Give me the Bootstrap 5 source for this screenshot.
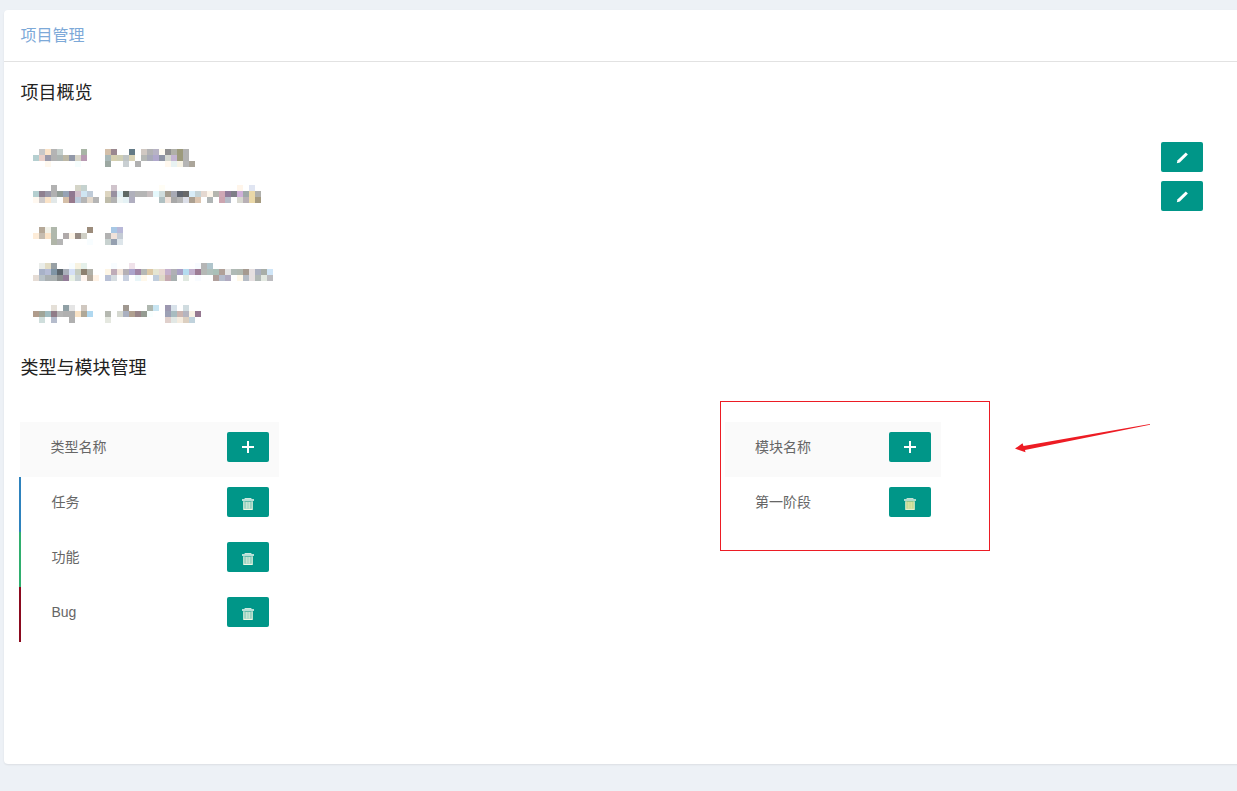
<!DOCTYPE html>
<html lang="zh-CN">
<head>
<meta charset="utf-8">
<title>项目管理</title>
<link href="https://cdn.jsdelivr.net/npm/bootstrap@5.3.0/dist/css/bootstrap.min.css" rel="stylesheet">
<style>
html,body{height:100%}
body{background:#edf1f6;overflow:hidden;font-family:"Liberation Sans","Noto Sans CJK SC",sans-serif;font-size:14px;color:#666;padding:10px 0 0 4px}
.pm-card{width:1253px;border:0;border-radius:4px;box-shadow:0 1px 2px rgba(0,0,0,.08);background:#fff;padding-bottom:122px}
.pm-head{height:52px;border-bottom:1px solid #e2e2e2;padding:0 16.5px;font-size:16px;line-height:52px;color:#7da9d8}
.pm-sec{font-size:18px;line-height:27px;color:#222;margin:0 0 0 16.5px;font-weight:400}
.pm-sec-first{margin-top:18px}
.pm-overview{margin:35px 54px 2px 17px;height:211px}
.pm-mosaic{display:block;margin:7px 0 0 12px}
.pm-mosaic rect{width:6px;height:6px}
.pm-edit-col{gap:9px}
.pm-btn{width:42px;height:30px;padding:0;border:0;border-radius:2px;background:#009688;display:flex;align-items:center;justify-content:center;flex:none}
.pm-btn:hover,.pm-btn:active{background:#009688}
.pm-trash{margin-top:3px}
.pm-tables{margin:40px 0 0 16px}
.pm-left{width:259px}
.pm-right{width:216px;margin-left:446px;position:relative}
.pm-row{height:55px;padding:10px 10px 0 30.5px;line-height:30px}
.pm-right .pm-row{padding-left:30px}
.pm-th{background:#fafafa}
.pm-tr{border-left:2px solid transparent;margin-left:-1px;margin-right:0}
.pm-blue{border-left-color:#2e82bd}
.pm-green{border-left-color:#2fae6e}
.pm-red{border-left-color:#8b0a1f}
.pm-box{position:absolute;left:-5px;top:-21px;width:270px;height:150px;border:1px solid #ec1c24;pointer-events:none}
.pm-arrow{position:absolute;left:285px;top:-2px;pointer-events:none}
</style>
</head>
<body>
<div class="card pm-card">
  <div class="pm-head">项目管理</div>
  <h2 class="pm-sec pm-sec-first">项目概览</h2>
  <div class="pm-overview d-flex justify-content-between align-items-start">
    <svg class="pm-mosaic" width="244" height="180" viewBox="0 0 244 180" aria-hidden="true">
      <g>
        <rect x="6" y="0" fill="#c8c8c8"/><rect x="12" y="0" fill="#fae3c8"/><rect x="18" y="0" fill="#b4b4b4"/><rect x="24" y="0" fill="#c5cfcc"/><rect x="48" y="0" fill="#a8b5a5"/><rect x="72" y="0" fill="#d3bfa9"/><rect x="78" y="0" fill="#9a8890"/><rect x="96" y="0" fill="#637a86"/><rect x="108" y="0" fill="#d0c8c2"/><rect x="114" y="0" fill="#b2b2b4"/><rect x="120" y="0" fill="#b7b3c4"/><rect x="126" y="0" fill="#fffcf2"/><rect x="132" y="0" fill="#8f8f8f"/><rect x="138" y="0" fill="#b0b0a8"/><rect x="144" y="0" fill="#9c9a7c"/><rect x="150" y="0" fill="#b2b2b2"/>
        <rect x="0" y="6" fill="#b5cfd0"/><rect x="6" y="6" fill="#e8cfc8"/><rect x="12" y="6" fill="#9a9aaa"/><rect x="18" y="6" fill="#b2b2b2"/><rect x="24" y="6" fill="#adb5b2"/><rect x="30" y="6" fill="#bdb8a5"/><rect x="36" y="6" fill="#9298a8"/><rect x="42" y="6" fill="#d8d5c8"/><rect x="48" y="6" fill="#b89ab2"/><rect x="72" y="6" fill="#a9b8b8"/><rect x="78" y="6" fill="#d5d0b0"/><rect x="84" y="6" fill="#cfcfb5"/><rect x="90" y="6" fill="#bfc4c4"/><rect x="96" y="6" fill="#d8d2b5"/><rect x="108" y="6" fill="#b5b8b5"/><rect x="114" y="6" fill="#a8aab8"/><rect x="120" y="6" fill="#b0a8cc"/><rect x="126" y="6" fill="#8f95a5"/><rect x="132" y="6" fill="#d5d8d0"/><rect x="138" y="6" fill="#c4b5d2"/><rect x="144" y="6" fill="#9c9a7c"/><rect x="150" y="6" fill="#b2b2b2"/>
        <rect x="12" y="12" fill="#fff8ee"/><rect x="42" y="12" fill="#f5fdfd"/><rect x="72" y="12" fill="#9ca8a2"/><rect x="90" y="12" fill="#c9cfd2"/><rect x="102" y="12" fill="#b0b0b0"/><rect x="132" y="12" fill="#fff8ee"/><rect x="138" y="12" fill="#e8f2f2"/><rect x="144" y="12" fill="#f7f3e5"/><rect x="150" y="12" fill="#b5b5b5"/><rect x="156" y="12" fill="#aba59a"/>
      </g>
      <g transform="translate(0 36)">
        <rect x="18" y="0" fill="#b2b2b2"/><rect x="42" y="0" fill="#d5d5c8"/><rect x="48" y="0" fill="#c5d2cf"/><rect x="78" y="0" fill="#d0c4cc"/><rect x="126" y="0" fill="#fffdf5"/><rect x="204" y="0" fill="#fff5ea"/><rect x="216" y="0" fill="#e0e5f2"/>
        <rect x="0" y="6" fill="#b5cfd0"/><rect x="6" y="6" fill="#8f8090"/><rect x="12" y="6" fill="#9a98a8"/><rect x="18" y="6" fill="#b0b0b0"/><rect x="24" y="6" fill="#919c96"/><rect x="30" y="6" fill="#97a3b5"/><rect x="36" y="6" fill="#907890"/><rect x="42" y="6" fill="#d2bfca"/><rect x="48" y="6" fill="#cfe5f2"/><rect x="54" y="6" fill="#bfcbd8"/><rect x="72" y="6" fill="#ddd5c0"/><rect x="78" y="6" fill="#9890a0"/><rect x="84" y="6" fill="#e0f0f5"/><rect x="90" y="6" fill="#5f6965"/><rect x="96" y="6" fill="#b0b0bb"/><rect x="102" y="6" fill="#b5b5b5"/><rect x="108" y="6" fill="#b5b5b5"/><rect x="114" y="6" fill="#c8bfc0"/><rect x="120" y="6" fill="#e5f8fc"/><rect x="126" y="6" fill="#cfdcdc"/><rect x="132" y="6" fill="#a59d90"/><rect x="138" y="6" fill="#a8aab5"/><rect x="144" y="6" fill="#60656f"/><rect x="150" y="6" fill="#6a6a6a"/><rect x="156" y="6" fill="#d8ecf7"/><rect x="162" y="6" fill="#c5d2d5"/><rect x="168" y="6" fill="#e5d8d0"/><rect x="174" y="6" fill="#fdf5ea"/><rect x="180" y="6" fill="#b5b5ae"/><rect x="186" y="6" fill="#cfa8b5"/><rect x="192" y="6" fill="#907c9a"/><rect x="198" y="6" fill="#7f7f88"/><rect x="204" y="6" fill="#cfb0d8"/><rect x="210" y="6" fill="#9fa8a8"/><rect x="216" y="6" fill="#ead8a8"/><rect x="222" y="6" fill="#b0b0ac"/>
        <rect x="0" y="12" fill="#fff8f0"/><rect x="6" y="12" fill="#cfcbcb"/><rect x="12" y="12" fill="#fae3c8"/><rect x="18" y="12" fill="#e2e8e8"/><rect x="30" y="12" fill="#d5bfa8"/><rect x="36" y="12" fill="#96788c"/><rect x="42" y="12" fill="#bccada"/><rect x="48" y="12" fill="#b5b5b5"/><rect x="54" y="12" fill="#e2d8cc"/><rect x="60" y="12" fill="#b5b5b5"/><rect x="72" y="12" fill="#bfbcaa"/><rect x="78" y="12" fill="#b2b2b2"/><rect x="84" y="12" fill="#eef5f5"/><rect x="90" y="12" fill="#e5f2f5"/><rect x="96" y="12" fill="#b0aec0"/><rect x="126" y="12" fill="#b0c0c2"/><rect x="132" y="12" fill="#efe2da"/><rect x="138" y="12" fill="#a8a8a8"/><rect x="144" y="12" fill="#b5b5b5"/><rect x="150" y="12" fill="#dcdfe8"/><rect x="156" y="12" fill="#ab9f90"/><rect x="162" y="12" fill="#dcc5b0"/><rect x="174" y="12" fill="#b0b5b5"/><rect x="186" y="12" fill="#cca5b0"/><rect x="192" y="12" fill="#b5bcc8"/><rect x="204" y="12" fill="#d8d8d0"/><rect x="210" y="12" fill="#b8b0b5"/><rect x="216" y="12" fill="#ead8a8"/><rect x="222" y="12" fill="#a59a80"/>
      </g>
      <g transform="translate(0 78)">
        <rect x="6" y="0" fill="#b5a898"/><rect x="12" y="0" fill="#f2f2ea"/><rect x="18" y="0" fill="#b0b8ac"/><rect x="54" y="0" fill="#9c8c7c"/><rect x="78" y="0" fill="#a8c8e5"/><rect x="84" y="0" fill="#b8b8d8"/>
        <rect x="0" y="6" fill="#fdecd8"/><rect x="6" y="6" fill="#c5bcb0"/><rect x="12" y="6" fill="#fae3c8"/><rect x="18" y="6" fill="#b0b8ac"/><rect x="30" y="6" fill="#b0aaaa"/><rect x="36" y="6" fill="#fdf5e8"/><rect x="42" y="6" fill="#988c84"/><rect x="48" y="6" fill="#cfcfc5"/><rect x="72" y="6" fill="#b2b2b2"/><rect x="78" y="6" fill="#f0e2da"/><rect x="84" y="6" fill="#c5ccd5"/>
        <rect x="18" y="12" fill="#b0b5a8"/><rect x="24" y="12" fill="#b5b5b5"/><rect x="54" y="12" fill="#f8fdff"/><rect x="72" y="12" fill="#c8d2d0"/><rect x="78" y="12" fill="#95a0b0"/><rect x="84" y="12" fill="#dde5ea"/>
      </g>
      <g transform="translate(0 114)">
        <rect x="6" y="0" fill="#eaedea"/><rect x="12" y="0" fill="#e2dcc5"/><rect x="18" y="0" fill="#98a0a5"/><rect x="36" y="0" fill="#f8fdff"/><rect x="42" y="0" fill="#f7f2e0"/><rect x="48" y="0" fill="#e5f0ea"/><rect x="78" y="0" fill="#f8fcff"/><rect x="96" y="0" fill="#f0e2ea"/><rect x="162" y="0" fill="#f8fbff"/><rect x="168" y="0" fill="#b5b5b5"/><rect x="174" y="0" fill="#b0c5cc"/>
        <rect x="6" y="6" fill="#a8b2c8"/><rect x="12" y="6" fill="#b5bcd5"/><rect x="18" y="6" fill="#8095a5"/><rect x="24" y="6" fill="#5c656c"/><rect x="30" y="6" fill="#aab0ba"/><rect x="36" y="6" fill="#d5dff5"/><rect x="42" y="6" fill="#c5ccc0"/><rect x="48" y="6" fill="#8c8070"/><rect x="54" y="6" fill="#b0b0a8"/><rect x="72" y="6" fill="#fdf5e5"/><rect x="78" y="6" fill="#bfacb8"/><rect x="84" y="6" fill="#f2e5da"/><rect x="90" y="6" fill="#b5b0b5"/><rect x="96" y="6" fill="#aca5cc"/><rect x="102" y="6" fill="#a085a5"/><rect x="108" y="6" fill="#b5b8b5"/><rect x="114" y="6" fill="#dcc8a5"/><rect x="120" y="6" fill="#e5e5d2"/><rect x="126" y="6" fill="#e8d8d2"/><rect x="132" y="6" fill="#c5b0cc"/><rect x="138" y="6" fill="#b0b0b5"/><rect x="144" y="6" fill="#a8a0c5"/><rect x="150" y="6" fill="#b5dcf0"/><rect x="156" y="6" fill="#c0b0cc"/><rect x="162" y="6" fill="#9c7c95"/><rect x="168" y="6" fill="#b5b8b5"/><rect x="174" y="6" fill="#b0c0bc"/><rect x="180" y="6" fill="#aac0b8"/><rect x="186" y="6" fill="#b0a098"/><rect x="192" y="6" fill="#e5e5e5"/><rect x="198" y="6" fill="#b0bab5"/><rect x="204" y="6" fill="#b0b8b0"/><rect x="210" y="6" fill="#a59a90"/><rect x="216" y="6" fill="#e5dfe0"/><rect x="222" y="6" fill="#aab0c0"/><rect x="228" y="6" fill="#a8aea8"/><rect x="234" y="6" fill="#cfe5f7"/>
        <rect x="0" y="12" fill="#e5dcd5"/><rect x="6" y="12" fill="#b8c2c8"/><rect x="12" y="12" fill="#aab0b2"/><rect x="18" y="12" fill="#aab0b0"/><rect x="24" y="12" fill="#8c9090"/><rect x="30" y="12" fill="#937c98"/><rect x="36" y="12" fill="#e8f0e5"/><rect x="42" y="12" fill="#c8d2d5"/><rect x="48" y="12" fill="#fff5f0"/><rect x="54" y="12" fill="#b2a89c"/><rect x="60" y="12" fill="#fff2e5"/><rect x="72" y="12" fill="#b8c0d5"/><rect x="78" y="12" fill="#d5dce0"/><rect x="90" y="12" fill="#c8d0e0"/><rect x="102" y="12" fill="#e8f5f8"/><rect x="108" y="12" fill="#fff8ea"/><rect x="120" y="12" fill="#c0cddc"/><rect x="126" y="12" fill="#ded8c8"/><rect x="132" y="12" fill="#c5a8b0"/><rect x="138" y="12" fill="#a8b0b0"/><rect x="150" y="12" fill="#dfe8e0"/><rect x="162" y="12" fill="#f8fbff"/><rect x="180" y="12" fill="#b0a09c"/><rect x="186" y="12" fill="#b5bccc"/><rect x="192" y="12" fill="#b0aac0"/><rect x="204" y="12" fill="#fff8e8"/><rect x="210" y="12" fill="#b5bcc5"/><rect x="216" y="12" fill="#e5dfe0"/><rect x="222" y="12" fill="#b0b8b5"/><rect x="228" y="12" fill="#e2e8e0"/><rect x="234" y="12" fill="#bcbcc0"/>
      </g>
      <g transform="translate(0 156)">
        <rect x="18" y="0" fill="#e5e0d8"/><rect x="30" y="0" fill="#90a0a5"/><rect x="36" y="0" fill="#e5e5e5"/><rect x="48" y="0" fill="#d0c8c0"/><rect x="90" y="0" fill="#a09890"/><rect x="114" y="0" fill="#b0b8b0"/><rect x="120" y="0" fill="#c8e5f2"/><rect x="132" y="0" fill="#9c98b0"/><rect x="138" y="0" fill="#d8e2ea"/><rect x="150" y="0" fill="#d0dce0"/>
        <rect x="0" y="6" fill="#b09c8c"/><rect x="6" y="6" fill="#a0a598"/><rect x="12" y="6" fill="#a0bcc0"/><rect x="18" y="6" fill="#907c88"/><rect x="24" y="6" fill="#b5b5b5"/><rect x="30" y="6" fill="#b0b0b0"/><rect x="36" y="6" fill="#b0b0b0"/><rect x="42" y="6" fill="#f8e2c5"/><rect x="48" y="6" fill="#b0a898"/><rect x="54" y="6" fill="#b0d8f0"/><rect x="72" y="6" fill="#b5b8b0"/><rect x="84" y="6" fill="#d5d8d0"/><rect x="90" y="6" fill="#aab0c0"/><rect x="96" y="6" fill="#b0a090"/><rect x="102" y="6" fill="#988488"/><rect x="108" y="6" fill="#959c92"/><rect x="114" y="6" fill="#f8ffff"/><rect x="132" y="6" fill="#9ca0b5"/><rect x="138" y="6" fill="#a8bcc0"/><rect x="144" y="6" fill="#ccb5b0"/><rect x="150" y="6" fill="#b5b5c0"/><rect x="156" y="6" fill="#f8f2e5"/><rect x="162" y="6" fill="#957890"/>
        <rect x="6" y="12" fill="#cfdedc"/><rect x="18" y="12" fill="#b5bccc"/><rect x="36" y="12" fill="#b0b0b0"/><rect x="72" y="12" fill="#e5e8e0"/><rect x="132" y="12" fill="#e0d0cc"/><rect x="138" y="12" fill="#e2e8e5"/><rect x="144" y="12" fill="#f5ecdf"/><rect x="150" y="12" fill="#dccfc0"/><rect x="156" y="12" fill="#c0d2dc"/>
      </g>
    </svg>
    <div class="pm-edit-col d-flex flex-column">
      <button type="button" class="btn pm-btn" aria-label="编辑"><svg width="14" height="14" viewBox="0 0 14 14"><path d="M1.8 13.2L2.6 10.2L10.8 2.4L12.9 4.4L4.8 12.4Z" fill="#fff"/></svg></button>
      <button type="button" class="btn pm-btn" aria-label="编辑"><svg width="14" height="14" viewBox="0 0 14 14"><path d="M1.8 13.2L2.6 10.2L10.8 2.4L12.9 4.4L4.8 12.4Z" fill="#fff"/></svg></button>
    </div>
  </div>
  <h2 class="pm-sec">类型与模块管理</h2>
  <div class="pm-tables d-flex align-items-start">
    <div class="pm-left">
      <div class="pm-row pm-th d-flex justify-content-between"><span>类型名称</span><button type="button" class="btn pm-btn" aria-label="添加"><svg width="14" height="14" viewBox="0 0 14 14"><path d="M7 1v12M1 7h12" stroke="#fff" stroke-width="2" fill="none"/></svg></button></div>
      <div class="pm-row pm-tr pm-blue d-flex justify-content-between"><span>任务</span><button type="button" class="btn pm-btn" aria-label="删除"><svg class="pm-trash" width="14" height="14" viewBox="0 0 14 14"><path d="M1 2.2h12v1.6H1z" fill="#e4f2ea"/><path d="M4 1h6l1 1.2H3z" fill="#cfe8df"/><path d="M2.8 4.2v8.2h8.4V4.2" fill="#7cc4b4" stroke="#f0f6e4" stroke-width="1.1"/><path d="M5.2 5v6.6M7 5v6.6M8.8 5v6.6" stroke="#f4fbe8" stroke-width=".9"/></svg></button></div>
      <div class="pm-row pm-tr pm-green d-flex justify-content-between"><span>功能</span><button type="button" class="btn pm-btn" aria-label="删除"><svg class="pm-trash" width="14" height="14" viewBox="0 0 14 14"><path d="M1 2.2h12v1.6H1z" fill="#e4f2ea"/><path d="M4 1h6l1 1.2H3z" fill="#cfe8df"/><path d="M2.8 4.2v8.2h8.4V4.2" fill="#7cc4b4" stroke="#f0f6e4" stroke-width="1.1"/><path d="M5.2 5v6.6M7 5v6.6M8.8 5v6.6" stroke="#f4fbe8" stroke-width=".9"/></svg></button></div>
      <div class="pm-row pm-tr pm-red d-flex justify-content-between"><span>Bug</span><button type="button" class="btn pm-btn" aria-label="删除"><svg class="pm-trash" width="14" height="14" viewBox="0 0 14 14"><path d="M1 2.2h12v1.6H1z" fill="#e4f2ea"/><path d="M4 1h6l1 1.2H3z" fill="#cfe8df"/><path d="M2.8 4.2v8.2h8.4V4.2" fill="#7cc4b4" stroke="#f0f6e4" stroke-width="1.1"/><path d="M5.2 5v6.6M7 5v6.6M8.8 5v6.6" stroke="#f4fbe8" stroke-width=".9"/></svg></button></div>
    </div>
    <div class="pm-right">
      <div class="pm-row pm-th d-flex justify-content-between"><span>模块名称</span><button type="button" class="btn pm-btn" aria-label="添加"><svg width="14" height="14" viewBox="0 0 14 14"><path d="M7 1v12M1 7h12" stroke="#fff" stroke-width="2" fill="none"/></svg></button></div>
      <div class="pm-row d-flex justify-content-between"><span>第一阶段</span><button type="button" class="btn pm-btn" aria-label="删除"><svg class="pm-trash" width="14" height="14" viewBox="0 0 14 14"><path d="M1 2.2h12v1.6H1z" fill="#d8ecdc"/><path d="M4 1h6l1 1.2H3z" fill="#bfe0d2"/><path d="M2.8 4.2v8.2h8.4V4.2" fill="#b8d48c" stroke="#e6f0cc" stroke-width="1.1"/><path d="M5.2 5v6.6M7 5v6.6M8.8 5v6.6" stroke="#e8ecb0" stroke-width=".9"/></svg></button></div>
      <div class="pm-box"></div>
      <svg class="pm-arrow" width="145" height="35" viewBox="0 0 145 35" aria-hidden="true"><path d="M140 4L140 4.8L15 30L15.5 32.2L5 28.6L12.5 23.2L13.5 26Z" fill="#ed1c24"/></svg>
    </div>
  </div>
</div>
<script src="https://cdn.jsdelivr.net/npm/bootstrap@5.3.0/dist/js/bootstrap.bundle.min.js"></script>
</body>
</html>
